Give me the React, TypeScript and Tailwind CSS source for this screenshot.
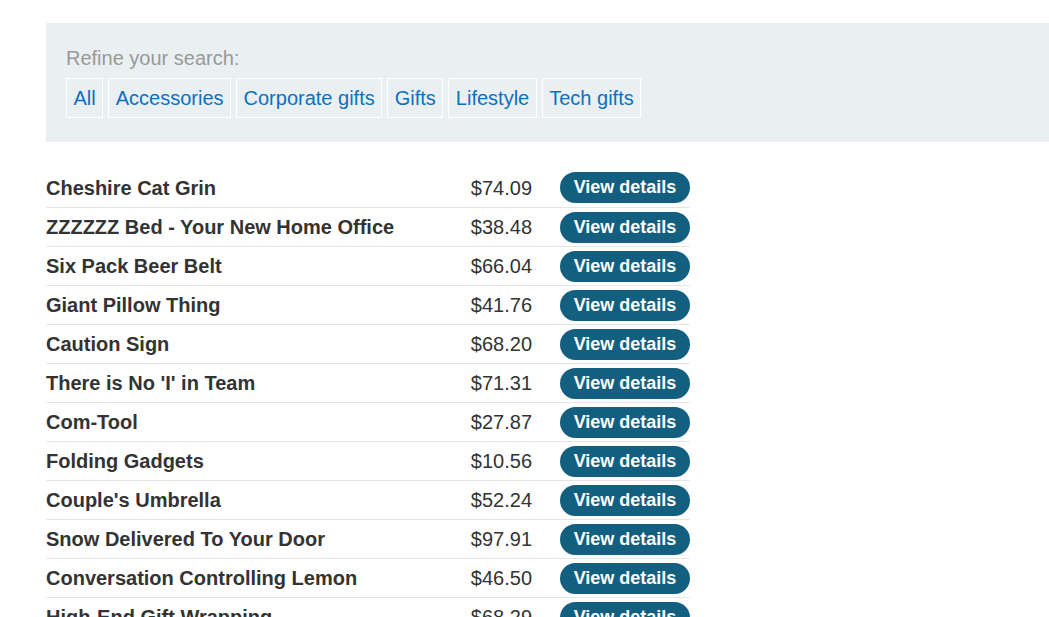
const categories = ["All", "Accessories", "Corporate gifts", "Gifts", "Lifestyle", "Tech gifts"];

const products = [
    { name: "Cheshire Cat Grin", price: "$74.09" },
    { name: "ZZZZZZ Bed - Your New Home Office", price: "$38.48" },
    { name: "Six Pack Beer Belt", price: "$66.04" },
    { name: "Giant Pillow Thing", price: "$41.76" },
    { name: "Caution Sign", price: "$68.20" },
    { name: "There is No 'I' in Team", price: "$71.31" },
    { name: "Com-Tool", price: "$27.87" },
    { name: "Folding Gadgets", price: "$10.56" },
    { name: "Couple's Umbrella", price: "$52.24" },
    { name: "Snow Delivered To Your Door", price: "$97.91" },
    { name: "Conversation Controlling Lemon", price: "$46.50" },
    { name: "High-End Gift Wrapping", price: "$68.29" },
];

export default function App() {
    return (
        <div className="h-[617px] overflow-hidden bg-white pl-[46px] pt-[23px] font-['Liberation_Sans',Arial,sans-serif]">
            <section className="bg-[#eaeff2] pl-[20px] pt-[24px] pb-[24px]">
                <p className="text-[20px] leading-[23px] text-[#999999] mb-[8px]">Refine your search:</p>
                <div className="flex gap-[5px]">
                    {categories.map((c) => (
                        <a
                            key={c}
                            href="#"
                            className="border border-white px-[6.5px] py-[7.5px] text-[20px] leading-[23px] text-[#0a71c2]"
                        >
                            {c}
                        </a>
                    ))}
                </div>
            </section>

            <table className="mt-[26px] border-collapse text-[#333333]">
                <tbody>
                    {products.map((p) => (
                        <tr key={p.name} className="border-b border-[#e5e5e5] h-[39px]">
                            <td className="w-[410px] p-0 pt-[1px] text-[20px] font-bold">{p.name}</td>
                            <td className="w-[76px] p-0 pt-[1px] text-right text-[20px]">{p.price}</td>
                            <td className="p-0 pt-[1px] pl-[28px]">
                                <button className="w-[130px] h-[31px] rounded-full bg-[#135f80] text-white text-[18px] font-bold">
                                    View details
                                </button>
                            </td>
                        </tr>
                    ))}
                </tbody>
            </table>
        </div>
    );
}
